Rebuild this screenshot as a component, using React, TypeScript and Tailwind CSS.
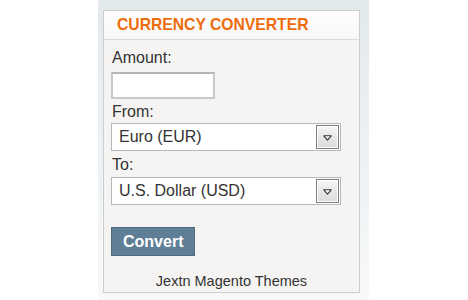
import React from 'react';

const FONT = { fontFamily: '"Liberation Sans", Arial, sans-serif' };

function Dropdown({ value }: { value: string }) {
  return (
    <div className="flex items-center w-[230px] h-[28px] bg-white border border-[#b8b8b8] pl-[7px] pr-[1px]">
      <span className="flex-1 text-[16px] leading-[18px] text-[#333333]">{value}</span>
      <div className="flex items-center justify-center w-[23px] h-[24px] border border-[#7c7c7c] bg-gradient-to-b from-[#f6f6f6] to-[#dadada] shadow-[inset_0_0_0_1px_#ffffff]">
        <svg width="9" height="6" viewBox="0 0 9 6" className="mt-[2px]">
          <path d="M0.8 0.8 H8.2 L4.5 5.2 Z" fill="#ffffff" stroke="#333333" strokeWidth="1.1" strokeLinejoin="round" />
        </svg>
      </div>
    </div>
  );
}

export default function App() {
  return (
    <div className="w-[468px] h-[300px] bg-white flex" style={FONT}>
      {/* sidebar column */}
      <div className="ml-[98px] w-[271px] h-full pt-[10px] pl-[5px] bg-gradient-to-b from-[#e2e9ed] via-[#edf1f3] to-[#f8f9fa]">
        <div className="w-[257px] border border-[#cdcdcd] bg-[#f5f4f2]">
          {/* header */}
          <div className="h-[29px] flex items-center pl-[13px] bg-gradient-to-b from-white to-[#f7f7f7] border-b border-[#dadada]">
            <span className="text-[15.7px] font-bold text-[#ef6c0c]">CURRENCY CONVERTER</span>
          </div>

          {/* body */}
          <div className="pt-[9px] pb-[2px] pl-[7px] flex flex-col items-start text-[#333333]">
            <label className="text-[16px] leading-[18px] ml-[1px]">Amount:</label>
            <div className="mt-[5px] w-[104px] h-[27px] bg-white border-2 border-[#c9c9c9] border-t-[#b5b5b5]" />

            <label className="mt-[4px] text-[16px] leading-[18px] ml-[1px]">From:</label>
            <div className="mt-[2px]">
              <Dropdown value="Euro (EUR)" />
            </div>

            <label className="mt-[5px] text-[16px] leading-[18px] ml-[1px]">To:</label>
            <div className="mt-[3px]">
              <Dropdown value="U.S. Dollar (USD)" />
            </div>

            <button className="mt-[22px] h-[29px] px-[11px] bg-[#5f7f96] border border-[#4f6c81] text-white text-[16px] font-bold leading-[18px]">
              Convert
            </button>

            <div className="mt-[17px] w-full pr-[7px] text-center text-[14.5px] leading-[17px] text-[#333333]">
              Jextn Magento Themes
            </div>
          </div>
        </div>
      </div>
    </div>
  );
}
